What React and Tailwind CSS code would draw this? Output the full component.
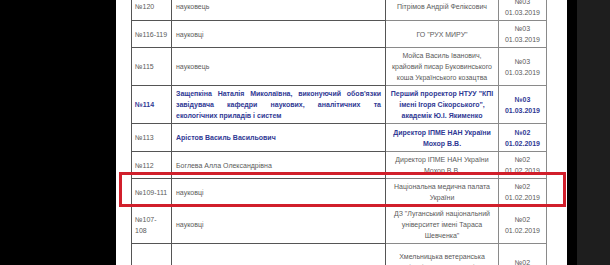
import React from "react";

const G = "text-[#5a5a5a]";
const B = "text-[#2f3994] font-bold";

const rows = [
  { h: "h-[28px]", n: "№120", nc: G, d: "науковець", dc: G, o: ["Пітрімов Андрій Феліксович"], oc: G, k: ["№03", "01.03.2019"], kc: G },
  { h: "h-[27px]", n: "№116-119", nc: G, d: "науковці", dc: G, o: ["ГО \"РУХ МИРУ\""], oc: G, k: ["№03", "01.03.2019"], kc: G },
  { h: "h-[37px]", n: "№115", nc: G, d: "науковець", dc: G, o: ["Мойса Василь Іванович,", "крайовий писар Буковинського", "коша Українського козацтва"], oc: G, k: ["№03", "01.03.2019"], kc: G },
  { h: "h-[38px]", n: "№114", nc: B, lines: ["Защепкіна Наталія Миколаївна, виконуючий обов'язки", "завідувача кафедри наукових, аналітичних та", "екологічних приладів і систем"], dc: B, o: ["Перший проректор НТУУ \"КПІ", "імені Ігоря Сікорського\",", "академік Ю.І. Якименко"], oc: B, k: ["№03", "01.03.2019"], kc: B },
  { h: "h-[28px]", n: "№113", nc: G, d: "Арістов Василь Васильович", dc: B, o: ["Директор ІПМЕ НАН України", "Мохор В.В."], oc: B, k: ["№02", "01.02.2019"], kc: B },
  { h: "h-[27px]", n: "№112", nc: G, d: "Боглева Алла Олександрівна", dc: G, o: ["Директор ІПМЕ НАН України", "Мохор В.В."], oc: G, k: ["№02", "01.02.2019"], kc: G },
  { h: "h-[26px]", n: "№109-111", nc: G, d: "науковці", dc: G, o: ["Національна медична палата", "України"], oc: G, k: ["№02", "01.02.2019"], kc: G },
  { h: "h-[36px]", n: "№107-108", nc: G, d: "науковці", dc: G, o: ["ДЗ \"Луганський національний", "університет імені Тараса", "Шевченка\""], oc: G, k: ["№02", "01.02.2019"], kc: G },
  { h: "h-[48px]", n: "№106", nc: G, d: "науковець", dc: G, o: ["Хмельницька ветеранська", "організація науково-дослідного", "інституту"], oc: G, k: ["№02", "01.02.2019"], kc: G },
];

export default function App() {
  return (
    <div className="w-[610px] h-[265px] overflow-hidden flex bg-black" style={{ fontFamily: '"Liberation Sans", Arial, sans-serif' }}>
      <div className="w-[116px] shrink-0 bg-black" />
      <div className="w-[451px] shrink-0 bg-white relative overflow-hidden">
        <table className="ml-[15px] mt-[-8px] border-collapse table-fixed w-[415px] text-[7px] leading-[11px]">
          <colgroup>
            <col className="w-[40px]" />
            <col className="w-[214px]" />
            <col className="w-[113px]" />
            <col className="w-[48px]" />
          </colgroup>
          <tbody>
            {rows.map((r, i) => (
              <tr key={i} className={r.h}>
                <td className={`border border-[#555555] px-[3px] py-[2px] align-middle ${r.nc}`}>{r.n}</td>
                <td className={`border border-[#555555] px-[4px] py-[2px] align-middle ${r.dc}`}>
                  {r.lines
                    ? r.lines.map((l, j) => (
                        <div
                          key={j}
                          className={j < r.lines.length - 1 ? "text-justify [text-align-last:justify]" : ""}
                        >
                          {l}
                        </div>
                      ))
                    : r.d}
                </td>
                <td className={`border border-[#8a8a8a] px-[2px] py-[2px] align-middle text-center ${r.oc}`}>
                  {r.o.map((l, j) => (
                    <div key={j} className="whitespace-nowrap">{l}</div>
                  ))}
                </td>
                <td className={`border border-[#8a8a8a] px-[2px] py-[2px] align-middle text-center ${r.kc}`}>
                  {r.k.map((l, j) => (
                    <div key={j}>{l}</div>
                  ))}
                </td>
              </tr>
            ))}
          </tbody>
        </table>
        <div className="absolute left-[3px] top-[172px] w-[447px] h-[35px] border-[3px] border-[#d11f2b]" />
      </div>
      <div className="w-[10px] shrink-0 bg-black" />
      <div className="flex-1 bg-[#1e1e1e]" />
    </div>
  );
}
